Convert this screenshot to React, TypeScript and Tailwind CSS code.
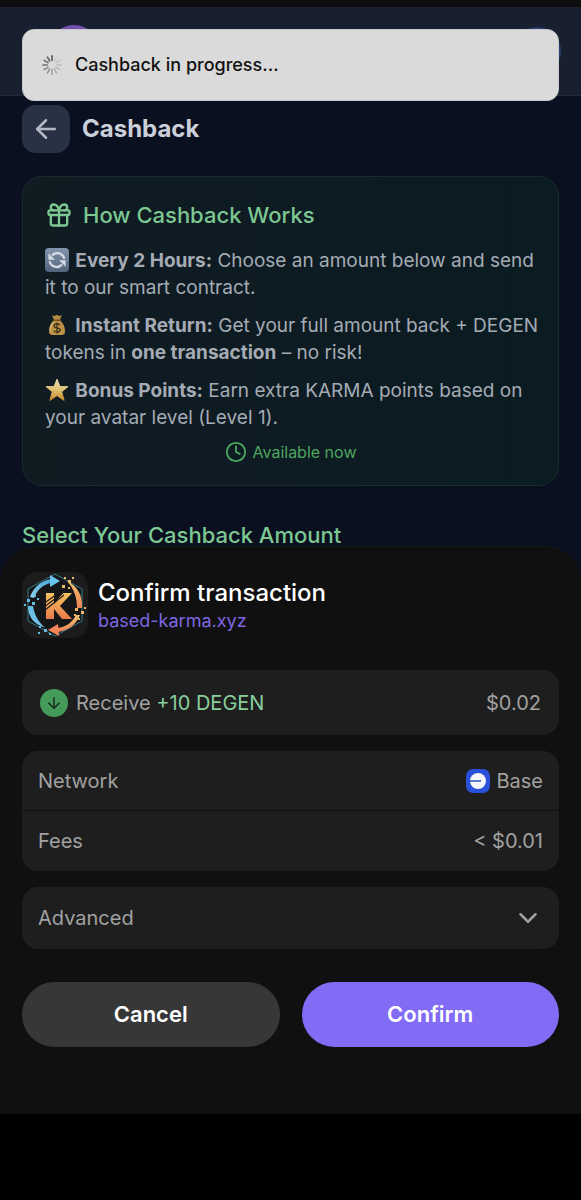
import { ArrowDown, ArrowLeft, ChevronDown, Clock, Gift } from "lucide-react";
import type { ReactNode } from "react";

const SPINNER_BLADES = [1, 0.1, 0.15, 0.2, 0.25, 0.3, 0.4, 0.5, 0.6, 0.7, 0.8, 0.9];

function Spinner() {
  return (
    <svg width="22" height="22" viewBox="0 0 24 24" className="shrink-0">
      {SPINNER_BLADES.map((opacity, i) => (
        <line
          key={i}
          x1="12"
          y1="2"
          x2="12"
          y2="7"
          stroke="#4a4a4a"
          strokeWidth="1.6"
          strokeLinecap="round"
          opacity={opacity}
          transform={`rotate(${i * 30} 12 12)`}
        />
      ))}
    </svg>
  );
}

function RefreshEmoji() {
  return (
    <svg width="24" height="24" viewBox="0 0 24 24" className="inline-block align-[-5px]">
      <defs>
        <linearGradient id="refresh-bg" x1="0" y1="0" x2="0" y2="1">
          <stop offset="0" stopColor="#8295ad" />
          <stop offset="1" stopColor="#51647c" />
        </linearGradient>
      </defs>
      <rect width="24" height="24" rx="4" fill="url(#refresh-bg)" />
      <g fill="none" stroke="#d5dae0" strokeWidth="2.4">
        <path d="M7 7.400C11.400 3 18 5.200 19.400 10.800" />
        <path d="M17 16.600C12.600 21 6 18.800 4.600 13.200" />
      </g>
      <path d="M3.400 11.800V5.200l6.600 6.600z" fill="#d5dae0" />
      <path d="M20.600 12.200v6.600L14 12.200z" fill="#d5dae0" />
    </svg>
  );
}

function MoneyBagEmoji() {
  return (
    <svg width="24" height="24" viewBox="0 0 24 24" className="inline-block align-[-5px]">
      <path d="M7 2.2 9.5 3l2.3-1.2L14.2 3l2.6-.8-2 5H9z" fill="#b48a45" />
      <path
        d="M9 7.5C6 10 4 13.500 4 18c0 3.200 1.300 4 4 4h8c2.700 0 4-.8 4-4 0-4.500-2-8-5-10.500z"
        fill="#be9348"
      />
      <path d="M8.400 8.600C6 11.500 5 14.500 5.200 18" fill="none" stroke="#dcb873" strokeWidth="1.200" />
      <path d="M8.600 7.300h6.600" stroke="#73501d" strokeWidth="1.600" strokeLinecap="round" />
      <path
        d="M15 12.200c-.6-1-1.700-1.400-3-1.400-1.700 0-2.900.8-2.900 2.100 0 3 6 1.300 6 4.200 0 1.300-1.200 2.100-3 2.100-1.500 0-2.700-.6-3.200-1.700M12 9.400v11.200"
        fill="none"
        stroke="#42351f"
        strokeWidth="1.400"
      />
    </svg>
  );
}

function StarEmoji() {
  return (
    <svg width="24" height="24" viewBox="0 0 24 24" className="inline-block align-[-5px]">
      <defs>
        <linearGradient id="star-fill" x1="0" y1="0" x2="0" y2="1">
          <stop offset="0" stopColor="#e6dbb4" />
          <stop offset="0.5" stopColor="#dfc173" />
          <stop offset="1" stopColor="#c68a2c" />
        </linearGradient>
      </defs>
      <path
        d="M12 1.200l3 7.400h8l-6.300 5.200 2.400 8.600L12 17.600l-7.100 4.800 2.400-8.600L1 8.600h8z"
        fill="url(#star-fill)"
        stroke="url(#star-fill)"
        strokeWidth="1"
        strokeLinejoin="round"
      />
    </svg>
  );
}

function KarmaLogo() {
  return (
    <svg viewBox="0 0 66 66" className="size-[66px] shrink-0">
      <defs>
        <linearGradient id="karma-k" x1="0" y1="0" x2="0" y2="1">
          <stop offset="0" stopColor="#f4c45f" />
          <stop offset="1" stopColor="#e8794b" />
        </linearGradient>
        <linearGradient id="karma-blue" x1="0" y1="1" x2="1" y2="0">
          <stop offset="0" stopColor="#8fd0ef" />
          <stop offset="1" stopColor="#45a8d8" />
        </linearGradient>
        <linearGradient id="karma-orange" x1="0" y1="0" x2="0" y2="1">
          <stop offset="0" stopColor="#f3c66e" />
          <stop offset="1" stopColor="#ee8257" />
        </linearGradient>
      </defs>
      <rect width="66" height="66" rx="15" fill="#1c1c1d" />
      <path d="M33 2 60 17v32L33 64 6 49V17z" fill="#151617" stroke="#397b86" strokeWidth="1" />
      {/* blue arrow, upper left */}
      <path d="M8 25C11 16 18 9 29 7l1 4C21 12 15 18 12 26z" fill="url(#karma-blue)" />
      <path d="M28 3l10 6-10 6z" fill="#68c5ee" />
      <path d="M6 34c0 11 6 18 17 22-6-6-10-11-12-22z" fill="url(#karma-blue)" />
      {/* orange arrow, lower right */}
      <path d="M45 9c10 5 16 14 15 27h-5c0-11-3-19-10-27z" fill="url(#karma-orange)" />
      <path d="M58 43c-4 10-12 16-23 17v-4c9-1 15-5 19-13z" fill="url(#karma-orange)" />
      <path d="M36 52l-10 6 11 6z" fill="#f3865b" />
      <path d="M24 21h8v11l9-11h9L38 34l12 13H40l-8-10v10h-8z" fill="url(#karma-k)" />
      <g stroke="#1d1b1a" strokeWidth="1.100">
        <path d="M21 32l17-12M22 35l19-14M23 38l19-15" />
      </g>
      <g fill="#68b9df">
        <path d="M5 27h3v3H5zM10 30h3v3h-3zM2 32h2v2H2zM15 26h2v2h-2zM12 23h2v2h-2zM17 54h2v2h-2zM22 57h3v3h-3zM16 60h2v2h-2zM27 61h2v2h-2z" />
      </g>
      <g fill="#edb76a">
        <path d="M42 5h2v2h-2zM46 8h3v3h-3zM40 13h3v3h-3zM50 5h2v2h-2zM46 15h2v2h-2zM53 36h3v3h-3zM59 39h3v3h-3zM52 42h2v2h-2zM62 35h2v2h-2zM56 46h2v2h-2z" />
      </g>
    </svg>
  );
}

function BaseLogo() {
  return (
    <svg width="24" height="24" viewBox="0 0 24 24">
      <rect width="24" height="24" rx="7" fill="#2850d8" />
      <circle cx="12" cy="12" r="8" fill="#f4f6fc" />
      <path d="M4 12h11" stroke="#2850b8" strokeWidth="1.500" />
    </svg>
  );
}

interface InfoProps {
  icon: ReactNode;
  label: string;
  children: ReactNode;
}

function InfoLine({ icon, label, children }: InfoProps) {
  return (
    <p>
      {icon} <strong className="ml-px font-bold">{label}</strong> {children}
    </p>
  );
}

export default function App() {
  return (
    <div className="min-h-screen bg-black font-['Inter',sans-serif]">
      <div className="relative bg-[#0b1020]">
        <div className="h-[7px] bg-[#0d0d0d]" />
        <header className="flex h-[89px] items-center justify-between border-b border-[#202a3a] bg-[#182030] pr-5 pl-12">
          <div className="size-[52px] rounded-full bg-[#7450b0]" />
          <div className="size-12 rounded-full bg-[#293e75]" />
        </header>

        {/* Toast */}
        <div
          role="status"
          className="absolute inset-x-[22px] top-[29px] flex h-[72px] items-center gap-3 rounded-xl border border-[#c8c9ca] bg-[#d9dad9] px-[18px]"
        >
          <Spinner />
          <span className="text-lg font-medium text-[#111]">Cashback in progress...</span>
        </div>

        <main className="px-[22px] pt-[9px]">
          <div className="flex items-center gap-3">
            <button
              aria-label="Back"
              className="flex size-12 items-center justify-center rounded-[14px] bg-[#293244] text-[#b4b8c2]"
            >
              <ArrowLeft size={30} strokeWidth={2} />
            </button>
            <h1 className="text-2xl font-bold text-[#cbd0da]">Cashback</h1>
          </div>

          <section className="mt-[23px] rounded-[20px] border border-[#162d2d] bg-linear-to-r from-[#101b22] to-[#0a1b22] px-[22px] pt-[22px] pb-[21px]">
            <h2 className="flex items-center gap-2.5 text-[22px] leading-8 font-medium text-[#7cc792]">
              <Gift size={28} strokeWidth={2} />
              How Cashback Works
            </h2>
            <div className="-mr-2 mt-4 space-y-[11px] text-[19px] leading-[27px] text-[#a5abb5]">
              <InfoLine icon={<RefreshEmoji />} label="Every 2 Hours:">
                Choose an amount below and send it to our smart contract.
              </InfoLine>
              <InfoLine icon={<MoneyBagEmoji />} label="Instant Return:">
                Get your full amount back + DEGEN tokens in <strong className="font-bold">one transaction</strong> –
                no risk!
              </InfoLine>
              <InfoLine icon={<StarEmoji />} label="Bonus Points:">
                Earn extra KARMA points based on your avatar level (Level 1).
              </InfoLine>
            </div>
            <div className="mt-[9px] flex items-center justify-center gap-1.5 text-base text-[#4ca65e]">
              <Clock size={22} strokeWidth={2} />
              Available now
            </div>
          </section>

          <h2 className="mt-[38px] text-[22px] leading-[22px] font-medium text-[#7cc792]">
            Select Your Cashback Amount
          </h2>
        </main>

        {/* Wallet sheet */}
        <section
          aria-label="Confirm transaction"
          className="rounded-t-[36px] border-t border-[#16191b] bg-[#101010] px-[22px] pt-[25px] pb-[67px] text-xl text-[#a1a1a1]"
        >
          <div className="flex items-center gap-2.5">
            <KarmaLogo />
            <div className="pt-1">
              <h2 className="text-2xl leading-7 font-medium text-white">Confirm transaction</h2>
              <a href="#" className="block text-lg leading-7 text-[#7d66e0]">
                based-karma.xyz
              </a>
            </div>
          </div>

          <div className="mt-8 flex h-[65px] items-center justify-between rounded-2xl bg-[#1e1e1e] px-[18px]">
            <div className="flex items-center gap-2">
              <span className="flex size-7 items-center justify-center rounded-full bg-[#439a59] text-[#172b1c]">
                <ArrowDown size={18} strokeWidth={2} />
              </span>
              <span>
                Receive <span className="text-[#89cf9d]">+10 DEGEN</span>
              </span>
            </div>
            <span>$0.02</span>
          </div>

          <dl className="mt-4 divide-y divide-[#101010] rounded-2xl bg-[#1e1e1e]">
            <div className="flex h-[60px] items-center justify-between px-4">
              <dt>Network</dt>
              <dd className="flex items-center gap-1.5">
                <BaseLogo />
                Base
              </dd>
            </div>
            <div className="flex h-[60px] items-center justify-between px-4">
              <dt>Fees</dt>
              <dd>&lt; $0.01</dd>
            </div>
          </dl>

          <button className="mt-4 flex h-[62px] w-full items-center justify-between rounded-2xl bg-[#1e1e1e] px-4">
            Advanced
            <ChevronDown size={30} strokeWidth={2} />
          </button>

          <div className="mt-[33px] flex gap-[22px] text-[22px] font-semibold text-white">
            <button className="h-[65px] flex-1 rounded-full bg-[#373737]">Cancel</button>
            <button className="h-[65px] flex-1 rounded-full bg-[#826bf5]">Confirm</button>
          </div>
        </section>
      </div>
    </div>
  );
}
